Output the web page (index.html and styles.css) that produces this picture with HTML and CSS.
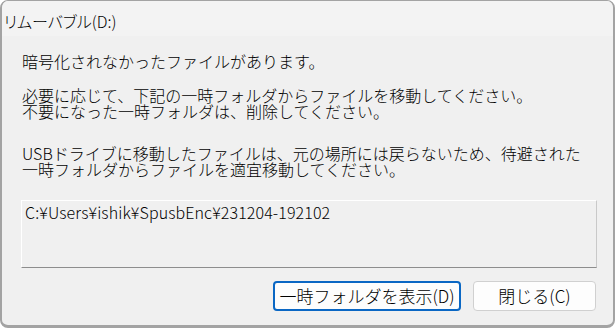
FILE: index.html
```html
<!DOCTYPE html>
<html lang="ja">
<head>
<meta charset="utf-8">
<title>リムーバブル(D:)</title>
<link rel="stylesheet" href="styles.css">
</head>
<body>
<div class="window">
  <div class="titlebar"><span class="title">リムーバブル(D:)</span></div>
  <div class="content">
    <p class="msg msg1">暗号化されなかったファイルがあります。</p>
    <p class="msg msg2">必要に応じて、下記の一時フォルダからファイルを移動してください。<br>不要になった一時フォルダは、削除してください。</p>
    <p class="msg msg3">USBドライブに移動したファイルは、元の場所には戻らないため、待避された<br>一時フォルダからファイルを適宜移動してください。</p>
    <div class="pathbox">C:¥Users¥ishik¥SpusbEnc¥231204-192102</div>
    <div class="buttons">
      <button class="btn btn-default">一時フォルダを表示(D)</button>
      <button class="btn btn-close">閉じる(C)</button>
    </div>
  </div>
</div>
</body>
</html>
```
FILE: styles.css
```css
html, body {
  margin: 0;
  padding: 0;
  background: #ffffff;
}
body {
  width: 616px;
  height: 329px;
  overflow: hidden;
  font-family: "Noto Sans CJK JP", "Noto Sans", sans-serif;
  color: #000;
}
.window {
  box-sizing: border-box;
  width: 615px;
  height: 328px;
  border-style: solid;
  border-color: #a3a3a3;
  border-width: 1px 2px 3px 2px;
  border-radius: 8px;
  background: #f0f0f0;
  overflow: hidden;
  display: flex;
  flex-direction: column;
}
.titlebar {
  height: 35px;
  background: #f3f3f3;
  display: flex;
  align-items: center;
  padding-left: 2px;
  flex-shrink: 0;
}
.title {
  font-size: 16px;
  font-weight: 300;
  font-feature-settings: "palt";
  line-height: 20px;
  margin-top: 4px;
}
.content {
  padding: 17px 17px 0 20px;
  display: flex;
  flex-direction: column;
}
.msg {
  margin: 0;
  font-size: 16px;
  font-weight: 300;
  line-height: 16px;
  white-space: nowrap;
}
.msg2 { margin-top: 18px; }
.msg3 { margin-top: 26px; }
.pathbox {
  margin-top: 23px;
  margin-left: -1px;
  box-sizing: border-box;
  width: 576px;
  height: 68px;
  border-style: solid;
  border-width: 1px;
  border-color: #ffffff #c9c9c9 #8d8d8d #ffffff;
  background: #f0f0f0;
  padding: 3px 0 0 3px;
  font-size: 16px;
  font-weight: 300;
  letter-spacing: 0.1px;
  line-height: 16px;
}
.buttons {
  margin-top: 13px;
  display: flex;
  justify-content: flex-end;
  gap: 12px;
}
.btn {
  box-sizing: border-box;
  height: 30px;
  border-radius: 4px;
  background: #fdfdfd;
  font-family: "Noto Sans CJK JP", "Noto Sans", sans-serif;
  font-size: 17px;
  font-weight: 300;
  line-height: 20px;
  color: #000;
  padding: 0;
  margin: 0;
}
.btn-default {
  width: 188px;
  border: 2px solid #0a67c4;
}
.btn-close {
  width: 123px;
  border: 1px solid #d0d0d0;
}
```
